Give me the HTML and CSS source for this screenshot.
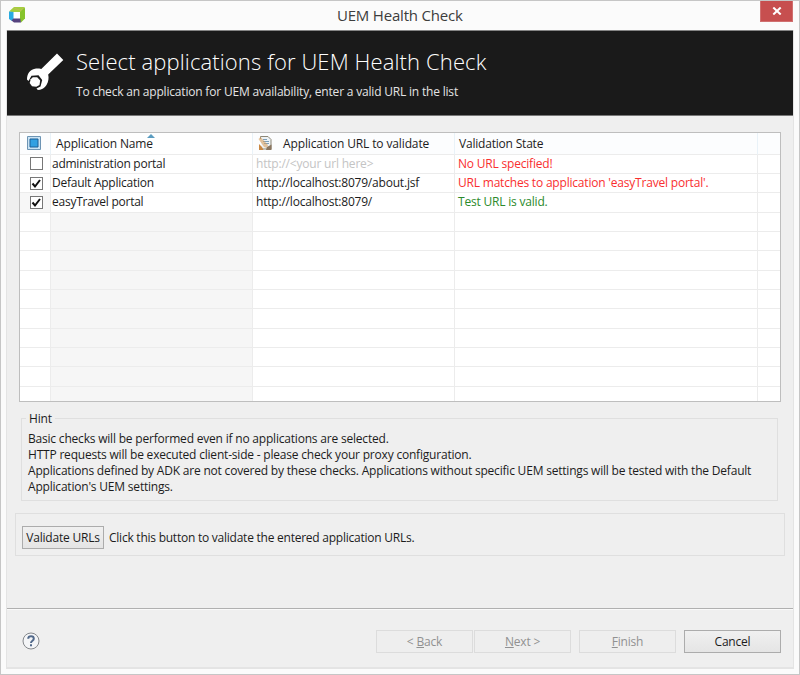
FILE: index.html
```html
<!DOCTYPE html>
<html lang="en">
<head>
<meta charset="utf-8">
<title>UEM Health Check</title>
<link rel="stylesheet" href="styles.css">
</head>
<body>
<div class="window">
  <header class="titlebar">
    <svg class="logo" viewBox="0 0 18 18" width="18" height="18">
      <path d="M1 5.500 6 1h10l1 1-4.500 4-6 .5z" fill="#a4cf3e"/>
      <path d="M1 5.500 6 6v8l-2 1-3-2z" fill="#29abe2"/>
      <path d="M12 6l4.500-4.500.5 1v10L13 16.500l-1.500-3z" fill="#86c32b"/>
      <path d="M6 2 12.500 4.500 16 1.500" stroke="#c7b65c" fill="none" stroke-width=".8"/>
      <path d="M3.500 14.500 6 12h6l1 4.500H6z" fill="#55427e"/>
      <path d="M5.500 6h6.500v6.500h-6.500z" fill="#fff"/>
    </svg>
    <span class="window-title">UEM Health Check</span>
    <button class="close" aria-label="Close"><svg viewBox="0 0 10 8" width="10" height="8"><path d="M1.300.5 8.700 7.500M8.700.5 1.300 7.500" stroke="#fff" stroke-width="2"/></svg></button>
  </header>
  <main class="dialog">
    <section class="banner">
      <svg class="wrench" viewBox="0 0 38 38" width="38" height="38">
        <path d="M31 .5 37.300 7 22.200 21.500C23 25 22.500 28.500 20.500 32 18.500 35.500 15 37.300 11.500 36.800L10.500 35.600 14.500 33.500 16.200 27 12.500 22.300 5.500 22.800 2.500 28 1 26.500C1 21 4 16.500 9 15.800 11 15.400 13 15.600 15.300 16z" fill="#fff"/>
        <path d="M6.800 24.300h4.400l3 3.200-.7 4.500-3.200 1.800-4.300-.6-2.300-3.200 1-3.700z" fill="#fff"/>
      </svg>
      <div class="banner-text">
        <h1>Select applications for UEM Health Check</h1>
        <p>To check an application for UEM availability, enter a valid URL in the list</p>
      </div>
    </section>
    <section class="content">
      <div class="table">
        <div class="row head">
          <div class="cell check"><svg viewBox="0 0 14 14" width="14" height="14"><path d="M.5.5h13v13H.5z" fill="#c9e3f4" stroke="#6d94b4"/><path d="M3 3h8v8H3z" fill="#31a0e2" stroke="#1d5f96"/></svg></div>
          <div class="cell"><span class="name-head">Application Name</span><i class="sort"></i></div>
          <div class="cell"><svg class="edit" viewBox="0 0 15 16" width="15" height="16"><path d="M2.500 4V1.500h7.500l3 3V14h-9" fill="#eef3f6" stroke="#8d8878"/><path d="M5 4.500h4M5 6.500h6M6 8.500h5" stroke="#7d9fb8"/><path d="M.5 4 2.500 2l7.500 8-1 3-3-1z" fill="#d8a05f" opacity=".6"/><path d="m1 9 3 3 1.500 3H1z" fill="#c98742"/><path d="m9 12 4.500-2.500V15H8z" fill="#8a7660"/></svg><span class="url-head">Application URL to validate</span></div>
          <div class="cell"><span class="state-head">Validation State</span></div>
          <div class="cell"></div>
        </div>
        <div class="row">
          <div class="cell check"><i class="box"></i></div>
          <div class="cell">administration portal</div>
          <div class="cell"><span class="placeholder">http://&lt;your url here&gt;</span></div>
          <div class="cell error">No URL specified!</div>
          <div class="cell"></div>
        </div>
        <div class="row">
          <div class="cell check"><i class="box"><svg viewBox="0 0 11 11" width="11" height="11"><path d="M1.500 5.500 4 8.500 9 2" fill="none" stroke="#111" stroke-width="2"/></svg></i></div>
          <div class="cell">Default Application</div>
          <div class="cell">http://localhost:8079/about.jsf</div>
          <div class="cell error">URL matches to application 'easyTravel portal'.</div>
          <div class="cell"></div>
        </div>
        <div class="row">
          <div class="cell check focus"><i class="box"><svg viewBox="0 0 11 11" width="11" height="11"><path d="M1.500 5.500 4 8.500 9 2" fill="none" stroke="#111" stroke-width="2"/></svg></i></div>
          <div class="cell">easyTravel portal</div>
          <div class="cell">http://localhost:8079/</div>
          <div class="cell valid">Test URL is valid.</div>
          <div class="cell"></div>
        </div>
        <div class="row empty"><div class="cell"></div><div class="cell"></div><div class="cell"></div><div class="cell"></div><div class="cell"></div></div>
        <div class="row empty"><div class="cell"></div><div class="cell"></div><div class="cell"></div><div class="cell"></div><div class="cell"></div></div>
        <div class="row empty"><div class="cell"></div><div class="cell"></div><div class="cell"></div><div class="cell"></div><div class="cell"></div></div>
        <div class="row empty"><div class="cell"></div><div class="cell"></div><div class="cell"></div><div class="cell"></div><div class="cell"></div></div>
        <div class="row empty"><div class="cell"></div><div class="cell"></div><div class="cell"></div><div class="cell"></div><div class="cell"></div></div>
        <div class="row empty"><div class="cell"></div><div class="cell"></div><div class="cell"></div><div class="cell"></div><div class="cell"></div></div>
        <div class="row empty"><div class="cell"></div><div class="cell"></div><div class="cell"></div><div class="cell"></div><div class="cell"></div></div>
        <div class="row empty"><div class="cell"></div><div class="cell"></div><div class="cell"></div><div class="cell"></div><div class="cell"></div></div>
        <div class="row empty"><div class="cell"></div><div class="cell"></div><div class="cell"></div><div class="cell"></div><div class="cell"></div></div>
        <div class="row empty"><div class="cell"></div><div class="cell"></div><div class="cell"></div><div class="cell"></div><div class="cell"></div></div>
      </div>
      <div class="hint">
        <span class="legend">Hint</span>
        <p>Basic checks will be performed even if no applications are selected.<br>HTTP requests will be executed client-side - please check your proxy configuration.<br>Applications defined by ADK are not covered by these checks. Applications without specific UEM settings will be tested with the Default<br>Application's UEM settings.</p>
      </div>
      <div class="validate">
        <button class="btn small">Validate URLs</button>
        <span class="validate-note">Click this button to validate the entered application URLs.</span>
      </div>
    </section>
    <footer class="footer">
      <svg class="help" viewBox="0 0 18 18" width="18" height="18"><circle cx="9" cy="9" r="8" fill="#f4f5f7" stroke="#85888c"/><path d="M6.200 6.700C6.300 3.500 11.800 3.500 11.800 6.700c0 2.100-2.800 2-2.800 4.300M9 12.200v2" fill="none" stroke="#52698a" stroke-width="2"/></svg>
      <button class="btn off back">&lt; <u>B</u>ack</button>
      <button class="btn off next"><u>N</u>ext &gt;</button>
      <button class="btn off finish"><u>F</u>inish</button>
      <button class="btn cancel">Cancel</button>
    </footer>
  </main>
</div>
</body>
</html>
```

FILE: styles.css
```css
* { box-sizing: border-box; }
body { margin: 0; font: 12px/16px "Open Sans", "Noto Sans", sans-serif; letter-spacing: -0.2px; color: #1c1c1c; }
h1, p { margin: 0; font-weight: 400; }
.window { width: 800px; height: 675px; border: 1px solid #c6c6c6; background: #fbfbfb; padding: 0 5px 5px; display: flex; flex-direction: column; }
.titlebar { height: 29px; flex: none; display: flex; align-items: flex-start; white-space: nowrap; }
.logo { margin: 5px 0 0 2px; }
.window-title { flex: 1; padding: 4px 0 0 311px; font-size: 15px; line-height: 20px; color: #3d3d3d; letter-spacing: -0.2px; }
.close { width: 33px; height: 21px; margin-right: 1px; padding: 0; border: 1px solid #d07070; border-top: 0; background: #c74f4f; display: flex; align-items: center; justify-content: center; }
.dialog { flex: 1; background: #efefef; border: 1px solid #e4e4e4; border-top: 0; border-bottom-width: 2px; display: flex; flex-direction: column; }
.banner { height: 86px; flex: none; display: flex; background: #1a1a1a; border-top: 1px solid #858585; border-bottom: 1px solid #777; }
.wrench { margin: 22px 0 0 19px; }
.banner-text { margin-left: 12px; color: #fff; white-space: nowrap; }
h1 { margin-top: 15px; font-size: 22px; line-height: 30px; font-weight: 300; letter-spacing: 0.12px; }
.banner p { margin-top: 8px; color: #e4e4e4; letter-spacing: -0.19px; }
.content { flex: 1; padding: 16px 8px 0; white-space: nowrap; }
.table { margin: 0 4px; width: 762px; height: 270px; overflow: hidden; border: 1px solid #bebebe; background: #fff; }
.row { display: grid; grid-template-columns: 31px 202px 202px 303px 22px; height: 19.33px; }
.row.head { height: 21.6px; }
.head .cell { background: #fcfdfe; border-right-color: #e9f2f8; }
.head span { position: relative; top: 1px; }
.cell { display: flex; align-items: center; padding-left: 1px; border-right: 1px solid #ececec; border-bottom: 1px solid #ececec; position: relative; }
.cell:last-child { border-right: 0; }
.cell:nth-child(3), .cell:nth-child(4) { padding-left: 3px; }
.cell:nth-child(2) { background: #f6f6f6; letter-spacing: -0.25px; }
.row .check { padding-left: 10px; }
.head .check { padding-left: 7px; }
.row:not(.empty) .cell:nth-child(2) { background: #fff; }
.focus { background: #f7f7f7; }
.name-head { margin-left: 4px; letter-spacing: -0.15px; }
.sort { position: absolute; left: 96px; top: 1px; border: 4px solid transparent; border-top: 0; border-bottom-color: #5b9cc0; }
.url-head { margin-left: 10px; letter-spacing: -0.13px; }
.edit { margin-left: 2px; }
.state-head { margin-left: 1px; }
.box { width: 13px; height: 13px; border: 1px solid #777; background: #fff; display: flex; }
.placeholder { color: #c4c4c4; }
.error { color: #f92f2f; }
.valid { color: #2c8a2c; }
.hint { position: relative; margin: 16px 6px 0; height: 83px; width: 757px; border: 1px solid #dfdfdf; }
.legend { position: absolute; left: 4px; top: -8px; padding: 0 3px; background: #efefef; }
.hint p { margin: 12px 0 0 6px; line-height: 16.15px; }
.validate { margin-top: 12px; width: 770px; height: 43px; border: 1px solid #dfdfdf; display: flex; align-items: center; padding: 6px 0 0 6px; gap: 5px; }
.validate-note { letter-spacing: -0.24px; }
.btn { height: 23px; padding: 0; border: 1px solid #acacac; background: linear-gradient(#f0f0f0, #e5e5e5); font: inherit; letter-spacing: inherit; color: inherit; }
.small { width: 82px; }
.footer { height: 59px; flex: none; border-top: 1px solid #b0b0b0; box-shadow: inset 0 1px #fafafa; display: flex; align-items: flex-start; padding: 21px 12px 0 15px; }
.help { margin: 2px auto 0 0; }
.footer .btn { width: 97px; }
.footer .off { color: #919191; background: #eee; border-color: #dcdcdc; }
.next { margin-left: 1px; }
.finish { margin-left: 8px; }
.cancel { margin-left: 8px; }
```
